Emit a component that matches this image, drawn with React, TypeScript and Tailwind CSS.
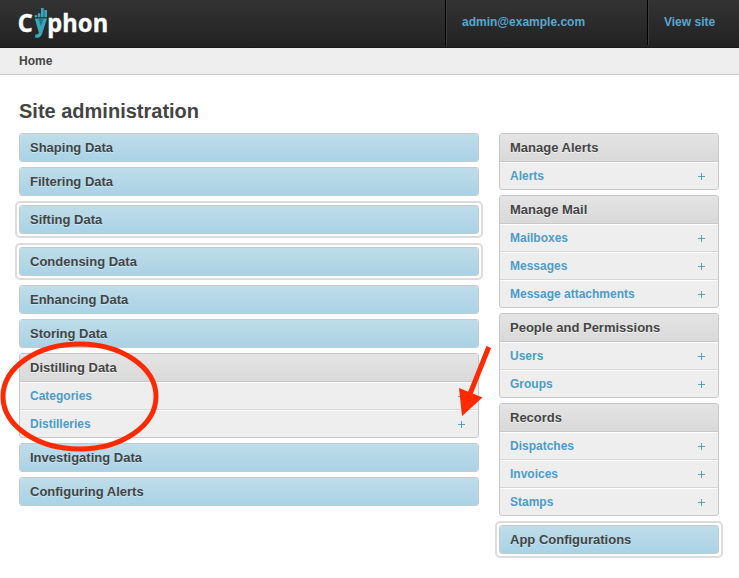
import React from "react";

const sans = "font-['Liberation_Sans',Arial,sans-serif]";

function Title({ children, blue = false }: { children: React.ReactNode; blue?: boolean }) {
  return (
    <h2
      className={`h-[27px] pl-[10px] text-[13px] leading-[27px] font-bold text-[#444] ${
        blue
          ? "bg-linear-to-b from-[#bfdde9] to-[#a9d2e6] [text-shadow:0_1px_0_#c4e9f5]"
          : "bg-linear-to-b from-[#e4e4e4] to-[#d9d9d9] [text-shadow:0_1px_0_#f4f4f4]"
      }`}
    >
      {children}
    </h2>
  );
}

function Bar({ children, ringed = false }: { children: string; ringed?: boolean }) {
  const bar = (
    <div className="overflow-hidden rounded-[3px] border border-[#c9cacb]">
      <Title blue>{children}</Title>
    </div>
  );
  return ringed ? (
    <div className="-mx-1 rounded-[5px] border-2 border-[#dcdcdc] p-0.5">{bar}</div>
  ) : (
    bar
  );
}

function Plus() {
  return (
    <svg width="7" height="7" viewBox="0 0 7 7" className="mt-px">
      <path d="M3 0h1v7h-1zM0 3h7v1h-7z" fill="#4fa3c6" />
    </svg>
  );
}

function Group({ title, items }: { title: string; items: string[] }) {
  return (
    <section className="overflow-hidden rounded-[3px] border border-[#c8c8c8] bg-[#eee]">
      <Title>{title}</Title>
      <ul className="border-t border-[#c8c8c8]">
        {items.map((item) => (
          <li
            key={item}
            className="flex h-7 items-center justify-between border-t border-b border-t-white border-b-[#d6d6d6] pr-[13px] pl-[10px] text-[12px] leading-[26px] font-bold text-[#4d9cc6] last:h-[27px] last:border-b-0"
          >
            <a>{item}</a>
            <Plus />
          </li>
        ))}
      </ul>
    </section>
  );
}

function Logo() {
  return (
    <svg width="100" height="42" viewBox="0 0 100 42" className="mt-[4px] ml-[17px] overflow-visible">
      <g className="font-['Noto_Sans',sans-serif] text-[25px] font-bold" fill="#fff" stroke="#fff" strokeWidth="0.3">
        <text x="0.8" y="28.4" textLength="15" lengthAdjust="spacingAndGlyphs">C</text>
        <text x="30.3" y="28.4" textLength="60.800" lengthAdjust="spacingAndGlyphs">phon</text>
      </g>
      <g fill="#3aa6b9">
        <path d="M17.600 11.300h2.600v2h-2.600zM20.800 9.300h2.600v4h-2.600zM24 4h2.700v9.300h-2.700zM27.300 6h2.700v7.300h-2.700z" />
        <path d="M17.800 14.600h12.200l-5 15.400q-1.300 3.700-4.600 3.700h-2.200v-3.100h1.400q1.500 0 2.200-1.900z" />
      </g>
      <path d="M21.400 14.600h5.200l-2.600 8z" fill="#237887" />
    </svg>
  );
}

export default function App() {
  return (
    <div className={`relative h-[578px] w-[739px] overflow-hidden bg-white ${sans}`}>
      <header className="flex h-12 justify-between border-b border-[#1b1718] bg-linear-to-b from-[#333] to-[#222]">
        <Logo />
        <nav className="flex h-[45px] text-[12px] leading-[44px] font-bold text-[#59a7d0]">
          <a className="w-[202px] border-l border-black pl-[16px] shadow-[inset_1px_0_0_#3c3c3c]">admin@example.com</a>
          <a className="w-[92px] border-l border-black pl-[16px] shadow-[inset_1px_0_0_#3c3c3c]">View site</a>
        </nav>
      </header>
      <div className="h-[27px] border-b border-[#ccc] bg-[#eee] pl-[19px] text-[12px] leading-[26px] font-bold text-[#444]">
        Home
      </div>
      <main className="px-5 pl-[19px]">
        <h1 className="h-[58px] pt-6 text-[20px] leading-[25px] font-bold text-[#444]">Site administration</h1>
        <div className="flex items-start justify-between">
          <div className="flex w-[460px] flex-col gap-[5px]">
            <Bar>Shaping Data</Bar>
            <Bar>Filtering Data</Bar>
            <Bar ringed>Sifting Data</Bar>
            <Bar ringed>Condensing Data</Bar>
            <Bar>Enhancing Data</Bar>
            <Bar>Storing Data</Bar>
            <Group title="Distilling Data" items={["Categories", "Distilleries"]} />
            <Bar>Investigating Data</Bar>
            <Bar>Configuring Alerts</Bar>
          </div>
          <div className="flex w-[220px] flex-col gap-[5px]">
            <Group title="Manage Alerts" items={["Alerts"]} />
            <Group title="Manage Mail" items={["Mailboxes", "Messages", "Message attachments"]} />
            <Group title="People and Permissions" items={["Users", "Groups"]} />
            <Group title="Records" items={["Dispatches", "Invoices", "Stamps"]} />
            <Bar ringed>App Configurations</Bar>
          </div>
        </div>
      </main>
      {/* Hand-drawn callouts over the Distilling Data group */}
      <svg className="pointer-events-none absolute inset-0" width="739" height="578" viewBox="0 0 739 578">
        <ellipse cx="79.500" cy="396.500" rx="76.500" ry="52.500" fill="none" stroke="#ff2a00" strokeWidth="5" />
        <path d="M488.800 347L470 394" stroke="#ff2a00" strokeWidth="5" />
        <path d="M459 388L482.500 397.500L462 416z" fill="#ff2a00" />
      </svg>
    </div>
  );
}
